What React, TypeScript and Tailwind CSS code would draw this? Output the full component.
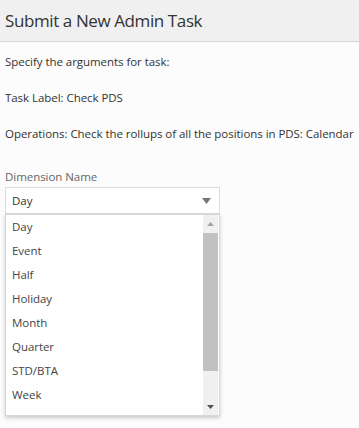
const items = ["Day", "Event", "Half", "Holiday", "Month", "Quarter", "STD/BTA", "Week"];

export default function App() {
  return (
    <div
      className="w-[359px] h-[428px] bg-[#fcfcfc] text-[#333] overflow-hidden"
      style={{ fontFamily: '"Open Sans", "Noto Sans", sans-serif' }}
    >
      <div className="h-[42px] bg-[#f0f0f0] border-b border-[#d4d4d4] px-[5px] flex items-center">
        <h1 className="text-[17px] tracking-[-0.4px] text-[#333] leading-none">Submit a New Admin Task</h1>
      </div>
      <div className="px-[5px] text-[11.5px] tracking-[-0.05px]">
        <p className="mt-[12px] leading-[16px]">Specify the arguments for task:</p>
        <p className="mt-[20px] leading-[16px]">Task Label: Check PDS</p>
        <p className="mt-[20px] leading-[16px]">Operations: Check the rollups of all the positions in PDS: Calendar</p>
        <p className="mt-[27px] leading-[16px] text-[#666]">Dimension Name</p>
        <div className="mt-[2px] w-[215px] h-[27px] border border-[#dcdcdc] bg-white flex items-center justify-between pl-[6px] pr-[8px]">
          <span>Day</span>
          <svg width="9" height="6" viewBox="0 0 9 6">
            <path d="M0 0h9L4.5 6z" fill="#777" />
          </svg>
        </div>
        <div className="w-[215px] h-[202px] bg-white border border-[#d8d8d8] shadow-[0_2px_4px_rgba(0,0,0,0.2)] flex">
          <ul className="flex-1">
            {items.map((it) => (
              <li key={it} className="h-[24px] leading-[24px] pl-[6px] text-[#444]">
                {it}
              </li>
            ))}
          </ul>
          <div className="w-[15px] mr-[1px] bg-[#f0f0f0] flex flex-col items-center">
            <div className="h-[17px] flex items-center justify-center">
              <svg width="7" height="4" viewBox="0 0 7 4">
                <path d="M0 4h7L3.5 0z" fill="#a3a3a3" />
              </svg>
            </div>
            <div className="mt-[1px] w-[15px] h-[138px] bg-[#c1c1c1]" />
            <div className="flex-1" />
            <div className="h-[17px] flex items-center justify-center">
              <svg width="7" height="4" viewBox="0 0 7 4">
                <path d="M0 0h7L3.5 4z" fill="#505050" />
              </svg>
            </div>
          </div>
        </div>
      </div>
    </div>
  );
}
